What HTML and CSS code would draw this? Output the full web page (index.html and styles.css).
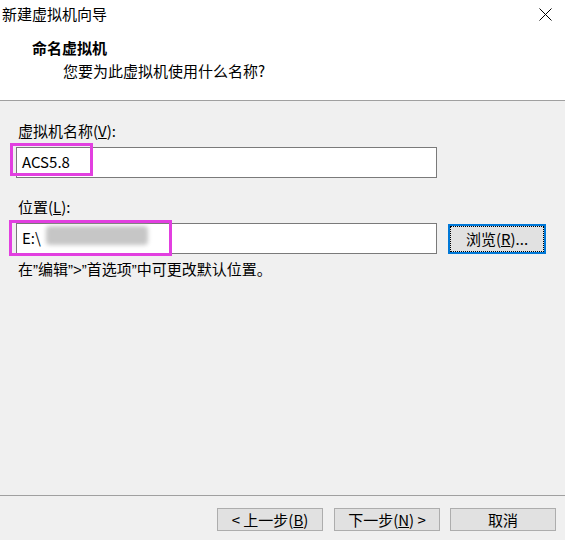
FILE: index.html
```html
<!DOCTYPE html>
<html lang="zh-CN">
<head>
<meta charset="utf-8">
<title>新建虚拟机向导</title>
<link rel="stylesheet" href="styles.css">
</head>
<body>
<div class="window">
  <div class="header">
    <div class="titlebar">
      <div class="title">新建虚拟机向导</div>
      <div class="close">
        <svg width="13" height="13" viewBox="0 0 13 13"><path d="M0.5 0.5 L12.5 12.5 M12.5 0.5 L0.5 12.5" stroke="#000" stroke-width="1" fill="none"/></svg>
      </div>
    </div>
    <div class="heading">命名虚拟机</div>
    <div class="subtitle">您要为此虚拟机使用什么名称?</div>
  </div>
  <div class="content">
    <div class="label">虚拟机名称(<u>V</u>):</div>
    <div class="field name-field">
      <div class="input">ACS5.8</div>
      <div class="mark mark-name"></div>
    </div>
    <div class="label label-loc">位置(<u>L</u>):</div>
    <div class="row">
      <div class="field loc-field">
        <div class="input">E:\</div>
        <div class="blur"></div>
        <div class="mark mark-loc"></div>
      </div>
      <div class="btn btn-focus"><span class="focus">浏览(<u>R</u>)...</span></div>
    </div>
    <div class="hint">在<span class="q">”</span>编辑<span class="q">”&gt;”</span>首选项<span class="q">”</span>中可更改默认位置。</div>
  </div>
  <div class="footer">
    <div class="btn">&lt; 上一步(<u>B</u>)</div>
    <div class="btn">下一步(<u>N</u>) &gt;</div>
    <div class="btn">取消</div>
  </div>
</div>
</body>
</html>
```

FILE: styles.css
```css
html, body {
  margin: 0;
  padding: 0;
}
body {
  width: 565px;
  height: 540px;
  overflow: hidden;
  background: #f0f0f0;
  font-family: "Noto Sans CJK SC", "Microsoft YaHei", sans-serif;
  font-size: 15px;
  color: #000;
}
.window {
  display: flex;
  flex-direction: column;
  height: 540px;
}
.header {
  background: #fff;
  height: 100px;
  border-bottom: 1px solid #a0a0a0;
  flex: none;
}
.titlebar {
  display: flex;
  justify-content: space-between;
  align-items: center;
  height: 28px;
}
.title {
  padding-left: 2px;
  line-height: 28px;
}
.close {
  width: 13px;
  height: 13px;
  margin-right: 13px;
  display: flex;
}
.heading {
  font-weight: bold;
  padding-left: 32px;
  line-height: 20px;
  margin-top: 10px;
}
.subtitle {
  padding-left: 63px;
  line-height: 20px;
  margin-top: 3px;
}
.content {
  flex: 1;
  padding: 20px 0 0 16px;
}
.label {
  line-height: 20px;
  padding-left: 2px;
}
.label-loc {
  margin-top: 19px;
}
.field {
  position: relative;
  width: 421px;
  margin-top: 6px;
}
.input {
  box-sizing: border-box;
  height: 31px;
  background: #fff;
  border: 1px solid #7a7a7a;
  padding-left: 5px;
  line-height: 28px;
}
.mark {
  position: absolute;
  border: 3px solid #e23fe0;
  box-sizing: border-box;
}
.mark-name {
  left: -6px;
  top: -4px;
  width: 83px;
  height: 33px;
}
.mark-loc {
  left: -7px;
  top: -3px;
  width: 163px;
  height: 36px;
}
.blur {
  position: absolute;
  left: 30px;
  top: 3px;
  width: 102px;
  height: 19px;
  background: #c6c6c6;
  filter: blur(2px);
  border-radius: 4px;
}
.row {
  display: flex;
  align-items: center;
  gap: 11px;
  margin-top: 6px;
}
.row .field {
  margin-top: 0;
}
.btn {
  box-sizing: border-box;
  width: 106px;
  height: 23px;
  background: #e1e1e1;
  border: 1px solid #adadad;
  display: flex;
  align-items: center;
  justify-content: center;
  line-height: 20px;
}
.btn-focus {
  width: 98px;
  height: 30px;
  border: 2px solid #0078d7;
  padding: 1px;
}
.focus {
  flex: 1;
  align-self: stretch;
  display: flex;
  align-items: center;
  justify-content: center;
  outline: 1px dotted #000;
}
.hint {
  margin-top: 5px;
  line-height: 20px;
  padding-left: 2px;
}
.q {
  font-family: "Liberation Sans", sans-serif;
}
.footer {
  flex: none;
  height: 45px;
  border-top: 1px solid #a0a0a0;
  display: flex;
  justify-content: flex-end;
  align-items: flex-start;
  gap: 10px;
  padding: 12px 9px 0 0;
  box-sizing: border-box;
}
.footer .btn:first-child {
  margin-right: 1px;
}
```
